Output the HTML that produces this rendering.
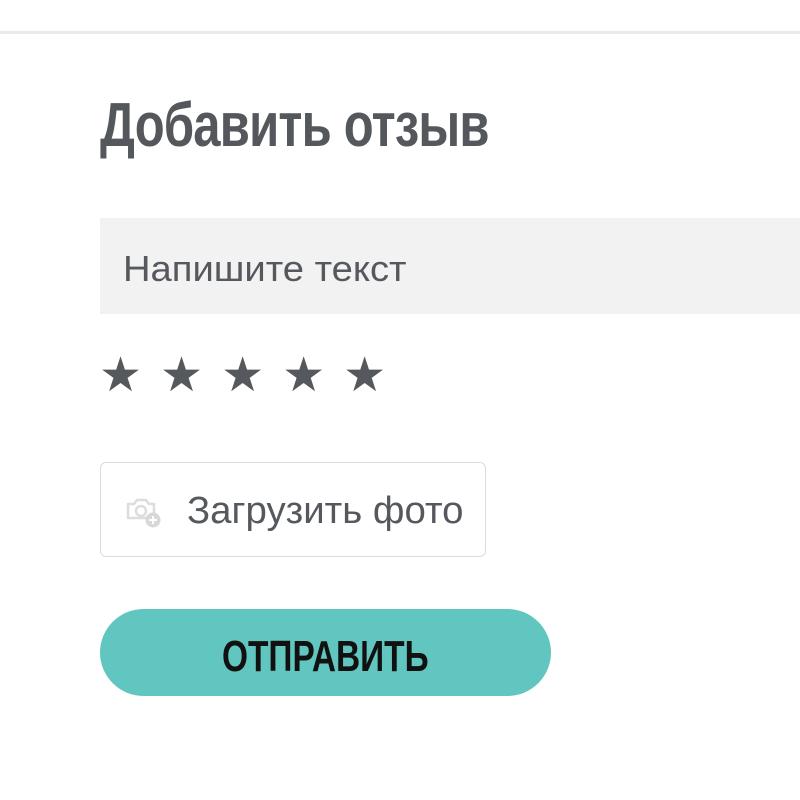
<!DOCTYPE html>
<html><head><meta charset="utf-8"><style>
body{margin:0;width:800px;height:800px;background:#fff;position:relative;overflow:hidden;font-family:"Liberation Sans",sans-serif}
.line{position:absolute;left:0;top:31px;width:800px;height:3px;background:#e9e9e9}
.t{position:absolute;white-space:nowrap;transform-origin:left top}
h1{margin:0;position:absolute;left:100px;top:90px;font-size:62px;font-weight:bold;color:#54585d;white-space:nowrap;transform:scaleX(0.79);transform-origin:left top;letter-spacing:-1px}
.inp{position:absolute;left:100px;top:218px;width:700px;height:96px;background:#f2f2f2}
.stars{position:absolute;left:99px;top:352px;font-size:48px;color:#55585d;letter-spacing:18px;line-height:1}
.up{position:absolute;left:100px;top:462px;width:386px;height:95px;border:1px solid #dcdcdc;border-radius:6px;box-sizing:border-box}
.btn{position:absolute;left:100px;top:609px;width:451px;height:87px;background:#62c6c0;border-radius:44px}
</style></head><body>
<div class="line"></div>
<h1>Добавить отзыв</h1>
<div class="inp"></div>
<div class="t" style="left:123px;top:248px;font-size:36px;color:#55585d;transform:scaleX(1.06)">Напишите текст</div>
<div class="stars">★★★★★</div>
<div class="up"></div>
<svg style="position:absolute;left:124px;top:494px" width="42" height="36" viewBox="0 0 42 36">
<path d="M4 10h6l3-4h9l3 4h5v14H4z" fill="none" stroke="#ddd" stroke-width="2.5" stroke-linejoin="round"/>
<circle cx="17" cy="17" r="5" fill="none" stroke="#ddd" stroke-width="2.5"/>
<circle cx="29" cy="26" r="7.5" fill="#d8d8d8"/>
<path d="M29 22v8M25 26h8" stroke="#fff" stroke-width="2"/>
</svg>
<div class="t" style="left:187px;top:490px;font-size:38px;color:#55585d;transform:scaleX(1.01)">Загрузить фото</div>
<div class="btn"></div>
<div class="t" style="left:222px;top:632px;font-size:44px;font-weight:bold;color:#111;transform:scaleX(0.76)">ОТПРАВИТЬ</div>
</body></html>
